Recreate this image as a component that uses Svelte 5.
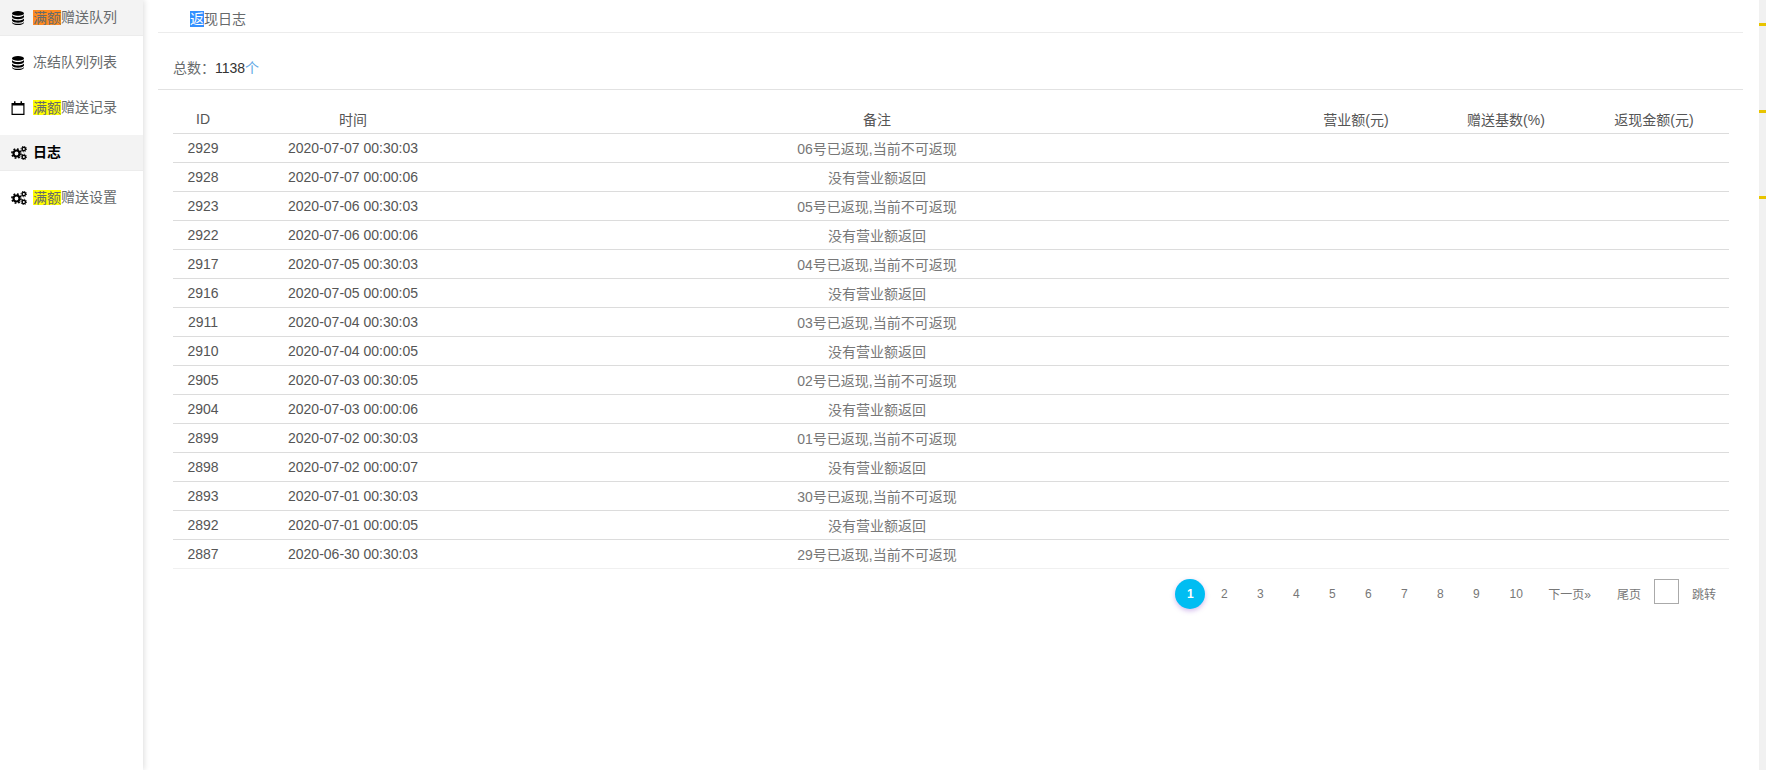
<script>
  const menu = [
    { icon: 'db', hl: 'orange', text: '赠送队列', cur: true },
    { icon: 'db', text: '冻结队列列表' },
    { icon: 'cal', hl: 'yellow', text: '赠送记录' },
    { icon: 'cogs', text: '日志', cur: true, bold: true },
    { icon: 'cogs', hl: 'yellow', text: '赠送设置' }
  ];

  const rows = [
    [2929, '2020-07-07 00:30:03', '06号已返现,当前不可返现'],
    [2928, '2020-07-07 00:00:06', '没有营业额返回'],
    [2923, '2020-07-06 00:30:03', '05号已返现,当前不可返现'],
    [2922, '2020-07-06 00:00:06', '没有营业额返回'],
    [2917, '2020-07-05 00:30:03', '04号已返现,当前不可返现'],
    [2916, '2020-07-05 00:00:05', '没有营业额返回'],
    [2911, '2020-07-04 00:30:03', '03号已返现,当前不可返现'],
    [2910, '2020-07-04 00:00:05', '没有营业额返回'],
    [2905, '2020-07-03 00:30:05', '02号已返现,当前不可返现'],
    [2904, '2020-07-03 00:00:06', '没有营业额返回'],
    [2899, '2020-07-02 00:30:03', '01号已返现,当前不可返现'],
    [2898, '2020-07-02 00:00:07', '没有营业额返回'],
    [2893, '2020-07-01 00:30:03', '30号已返现,当前不可返现'],
    [2892, '2020-07-01 00:00:05', '没有营业额返回'],
    [2887, '2020-06-30 00:30:03', '29号已返现,当前不可返现']
  ];

  const pages = [2, 3, 4, 5, 6, 7, 8, 9, 10];
</script>

<div class="page">
  <aside class="side">
    {#each menu as m}
      <div class="item" class:cur={m.cur} class:bold={m.bold}>
        {#if m.icon === 'db'}
          <svg class="ico" viewBox="0 0 16 14" width="16" height="14">
            <ellipse cx="7" cy="2.4" rx="6" ry="2.4" />
            <path d="M1 3.900c1 1.500 3.500 2 6 2s5-.5 6-2v2.200c-.6 1.500-3.200 2.200-6 2.200S1.600 7.600 1 6.100z" />
            <path d="M1 7.400c1 1.500 3.500 2 6 2s5-.5 6-2v2.200c-.6 1.500-3.200 2.200-6 2.200S1.600 11.100 1 9.600z" />
            <path d="M1 10.900c1 1.500 3.500 1.900 6 1.900s5-.4 6-1.900v.8c-.6 1.500-3.200 2.300-6 2.300s-5.400-.8-6-2.300z" />
          </svg>
        {:else if m.icon === 'cal'}
          <svg class="ico" viewBox="0 0 16 14" width="16" height="14">
            <path fill-rule="evenodd" d="M.5 2H3V.3h1.500V2h5V.3H11V2h2.500v12H.5zM1.700 4.600v8.200h10.600V4.600z" />
          </svg>
        {:else}
          <svg class="ico" viewBox="0 0 16 14" width="16" height="14">
            <circle class="ring" cx="5.500" cy="7.500" r="3" />
            <circle class="teeth" cx="5.500" cy="7.500" r="4.600" />
            <circle class="ring thin" cx="12.800" cy="3" r="1.700" />
            <circle class="teeth thin" cx="12.800" cy="3" r="2.800" />
            <circle class="ring thin" cx="12.800" cy="11" r="1.700" />
            <circle class="teeth thin" cx="12.800" cy="11" r="2.800" />
          </svg>
        {/if}
        <span class="label">{#if m.hl}<mark class={m.hl}>满额</mark>{/if}{m.text}</span>
      </div>
    {/each}
  </aside>

  <main class="main">
    <div class="tabs"><span class="tab"><span class="sel">返</span>现日志</span></div>
    <div class="total">总数：<b>1138</b><i>个</i></div>

    <div class="tablebox">
      <table>
        <thead>
          <tr>
            <th class="c-id">ID</th>
            <th class="c-time">时间</th>
            <th>备注</th>
            <th class="c-a">营业额(元)</th>
            <th class="c-a">赠送基数(%)</th>
            <th class="c-b">返现金额(元)</th>
          </tr>
        </thead>
        <tbody>
          {#each rows as r}
            <tr>
              <td>{r[0]}</td>
              <td>{r[1]}</td>
              <td class="note">{r[2]}</td>
              <td></td>
              <td></td>
              <td></td>
            </tr>
          {/each}
        </tbody>
      </table>

      <div class="pager">
        <span class="num on">1</span>
        {#each pages as p}
          <span class="num" class:wide={p === 10}>{p}</span>
        {/each}
        <span class="txt next">下一页»</span>
        <span class="txt last">尾页</span>
        <span class="jump"></span>
        <span class="txt">跳转</span>
      </div>
    </div>
  </main>

  <div class="scroll">
    <span class="tick t1"></span>
    <span class="tick t2"></span>
    <span class="tick t3"></span>
  </div>
</div>

<style>
  :global(body) {
    margin: 0;
    background: #fff;
    overflow: hidden;
  }

  .page {
    display: flex;
    height: 770px;
    font-family: "Liberation Sans", "Noto Sans CJK SC", sans-serif;
    font-size: 14px;
    color: #676a6c;
  }

  .side {
    width: 143px;
    flex: none;
    background: #fff;
    box-shadow: 1px 0 6px rgba(0, 0, 0, 0.14);
  }

  .item {
    display: flex;
    align-items: center;
    height: 35px;
    margin-bottom: 10px;
    padding-left: 11px;
    box-sizing: border-box;
  }

  .item.cur {
    background: #f3f3f3;
    box-shadow: 0 1px 0 #ececec;
  }

  .item.bold {
    color: #000;
    font-weight: bold;
  }

  .ico {
    flex: none;
    fill: #000;
    margin-right: 6px;
  }

  .label {
    margin-bottom: 2px;
    line-height: 16px;
  }

  .ring {
    fill: none;
    stroke: #000;
    stroke-width: 2.200;
  }

  .ring.thin {
    stroke-width: 1.400;
  }

  .teeth {
    fill: none;
    stroke: #000;
    stroke-width: 1.600;
    stroke-dasharray: 1.800 1.800;
  }

  .teeth.thin {
    stroke-width: 1;
    stroke-dasharray: 1.100 1.100;
  }

  mark {
    color: inherit;
    display: inline-block;
    height: 15px;
    line-height: 16px;
    vertical-align: top;
    margin-top: 1px;
  }

  mark.orange {
    background: #ff8a1f;
  }

  mark.yellow {
    background: #ffff00;
  }

  .main {
    flex: 1;
    min-width: 0;
    padding: 0 16px 0 15px;
  }

  .tabs {
    height: 32px;
    border-bottom: 1px solid #ececec;
    padding-left: 32px;
    line-height: 39px;
  }

  .sel {
    background: #3390ff;
    color: #fff;
  }

  .total {
    height: 36px;
    padding: 20px 0 0 15px;
    line-height: 30px;
    border-bottom: 1px solid #e2e2e2;
  }

  .total b {
    font-weight: normal;
    color: #333;
  }

  .total i {
    font-style: normal;
    color: #62a8e5;
  }

  .tablebox {
    padding: 0 14px 0 15px;
  }

  table {
    width: 100%;
    border-collapse: collapse;
    table-layout: fixed;
    text-align: center;
  }

  th {
    font-weight: normal;
    height: 43px;
    padding: 15px 0 0;
    color: #555;
    border-bottom: 1px solid #dcdcdc;
    box-sizing: border-box;
  }

  .c-id {
    width: 60px;
  }

  .c-time {
    width: 240px;
  }

  .c-a {
    width: 150px;
  }

  .c-b {
    width: 148px;
    padding-right: 2px;
  }

  td {
    height: 29px;
    padding: 0;
    box-sizing: border-box;
    border-bottom: 1px solid #dcdcdc;
    color: #555;
  }

  td.note {
    color: #777;
  }

  tr:last-child td {
    border-bottom-color: #f0f0f0;
  }

  .pager {
    display: flex;
    align-items: center;
    justify-content: flex-end;
    margin-top: 10px;
    padding-right: 13px;
    font-size: 12px;
    color: #777;
    height: 30px;
  }

  .num {
    width: 36px;
    text-align: center;
    line-height: 30px;
  }

  .num.wide {
    width: 44px;
  }

  .num.on {
    width: 30px;
    height: 30px;
    margin-right: 1px;
    border-radius: 50%;
    background: #00bdf2;
    color: #fff;
    font-weight: bold;
    box-shadow: 0 2px 5px rgba(130, 60, 200, 0.35);
  }

  .next {
    margin-left: 10px;
  }

  .last {
    margin-left: 26px;
  }

  .jump {
    width: 25px;
    height: 25px;
    box-sizing: border-box;
    border: 1px solid #aaa;
    margin: -5px 13px 0 13px;
  }

  .scroll {
    position: relative;
    width: 7px;
    flex: none;
    background: #f1f1f1;
  }

  .tick {
    position: absolute;
    left: 0;
    width: 7px;
    height: 3px;
    background: #e8c400;
  }

  .t1 {
    top: 23px;
  }

  .t2 {
    top: 110px;
  }

  .t3 {
    top: 196px;
  }
</style>
